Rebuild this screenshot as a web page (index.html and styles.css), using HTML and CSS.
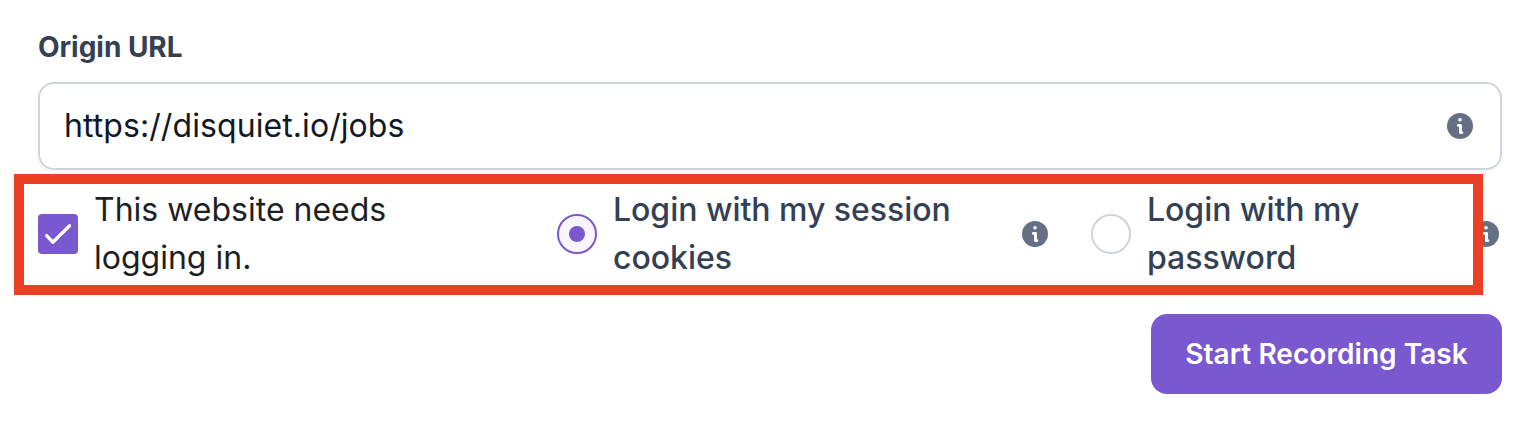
FILE: index.html
```html
<!DOCTYPE html>
<html lang="en">

<head>
    <meta charset="UTF-8">
    <meta name="viewport" content="width=device-width, initial-scale=1.0">
    <title>Start Recording Task</title>
    <link rel="stylesheet" href="styles.css">
</head>

<body>
    <!-- Shared icons -->
    <svg class="icon-defs" width="0" height="0">
        <symbol id="info" viewBox="0 0 26 26">
            <circle cx="13" cy="13" r="13" fill="#667085" />
            <circle cx="13" cy="6.8" r="1.8" fill="#fff" />
            <path d="M11.4 12.4h2.1v7.2h1.4" fill="none" stroke="#fff" stroke-width="2.9" stroke-linecap="round" stroke-linejoin="round" />
        </symbol>
    </svg>

    <form class="task-form">
        <label class="field-label" for="origin">Origin URL</label>
        <div class="url-field">
            <input class="url-input" id="origin" type="text" value="https://disquiet.io/jobs">
            <svg class="info-icon"><use href="#info" /></svg>
        </div>

        <!-- Login options -->
        <div class="login-row">
            <div class="option">
                <span class="checkbox">
                    <svg class="check" viewBox="0 0 40 40"><path d="M8.6 21.6l6.2 6.6L31.6 11.7" /></svg>
                </span>
                <span class="option-text needs-login">This website needs logging in.</span>
            </div>
            <div class="option cookies">
                <span class="radio checked"></span>
                <span class="option-text">Login with my session cookies</span>
                <svg class="info-icon"><use href="#info" /></svg>
            </div>
            <div class="option">
                <span class="radio"></span>
                <span class="option-text">Login with my password</span>
                <svg class="info-icon"><use href="#info" /></svg>
            </div>
            <div class="highlight"></div>
        </div>

        <button class="start-button" type="button">Start Recording Task</button>
    </form>
</body>

</html>
```

FILE: styles.css
```css
body {
    font-family: Inter, sans-serif;
    margin: 0;
    background: #fff;
    color: #344054;
}

.icon-defs {
    position: absolute;
}

.task-form {
    display: flex;
    flex-direction: column;
    padding: 27px 14px 0 38px;
}

.field-label {
    font-size: 28px;
    line-height: 40px;
    font-weight: 700;
    letter-spacing: -0.03px;
    margin-bottom: 15px;
}

.url-field {
    display: flex;
    align-items: center;
    box-sizing: border-box;
    height: 88px;
    padding: 0 27px 0 24px;
    border: 2px solid #ced5dc;
    border-radius: 16px;
    box-shadow: 0 2px 4px rgba(16, 24, 40, 0.05);
}

.url-input {
    flex: 1;
    padding: 0;
    border: none;
    outline: none;
    background: none;
    font-family: inherit;
    font-size: 32px;
    line-height: 48px;
    letter-spacing: 0.08px;
    color: #101828;
}

.info-icon {
    width: 26px;
    height: 26px;
    flex-shrink: 0;
}

.login-row {
    position: relative;
    display: grid;
    grid-template-columns: 519px 534px 408px;
    margin: 16px 0 32px;
}

.option {
    display: flex;
    align-items: center;
    gap: 16px;
}

.option-text {
    flex: 1;
    font-size: 32px;
    line-height: 48px;
    font-weight: 500;
    letter-spacing: -0.03px;
}

.needs-login {
    flex: none;
    width: 340px;
    font-weight: 400;
    letter-spacing: 0;
    color: #1d1f24;
}

.cookies {
    padding-right: 43px;
}

.checkbox {
    width: 40px;
    height: 40px;
    border-radius: 4px;
    background: #7a58d0;
}

.check {
    display: block;
    fill: none;
    stroke: #fff;
    stroke-width: 3.3;
    stroke-linecap: round;
    stroke-linejoin: round;
}

.radio {
    display: flex;
    align-items: center;
    justify-content: center;
    box-sizing: border-box;
    width: 40px;
    height: 40px;
    border: 2px solid #d0d5dd;
    border-radius: 50%;
}

.radio.checked {
    border-color: #7a58d0;
    background: #f9f5ff;
}

.radio.checked::after {
    content: "";
    width: 16px;
    height: 16px;
    border-radius: 50%;
    background: #7a58d0;
}

/* red frame drawn over the options */
.highlight {
    position: absolute;
    top: -12px;
    left: -24px;
    box-sizing: border-box;
    width: 1469px;
    height: 121px;
    border: 10px solid #eb4026;
}

.start-button {
    align-self: flex-end;
    width: 351px;
    height: 80px;
    padding: 0;
    border: none;
    border-radius: 16px;
    background: #7a58d0;
    color: #fff;
    font-family: inherit;
    font-size: 28px;
    line-height: 40px;
    font-weight: 600;
    letter-spacing: 0.05px;
}
```
